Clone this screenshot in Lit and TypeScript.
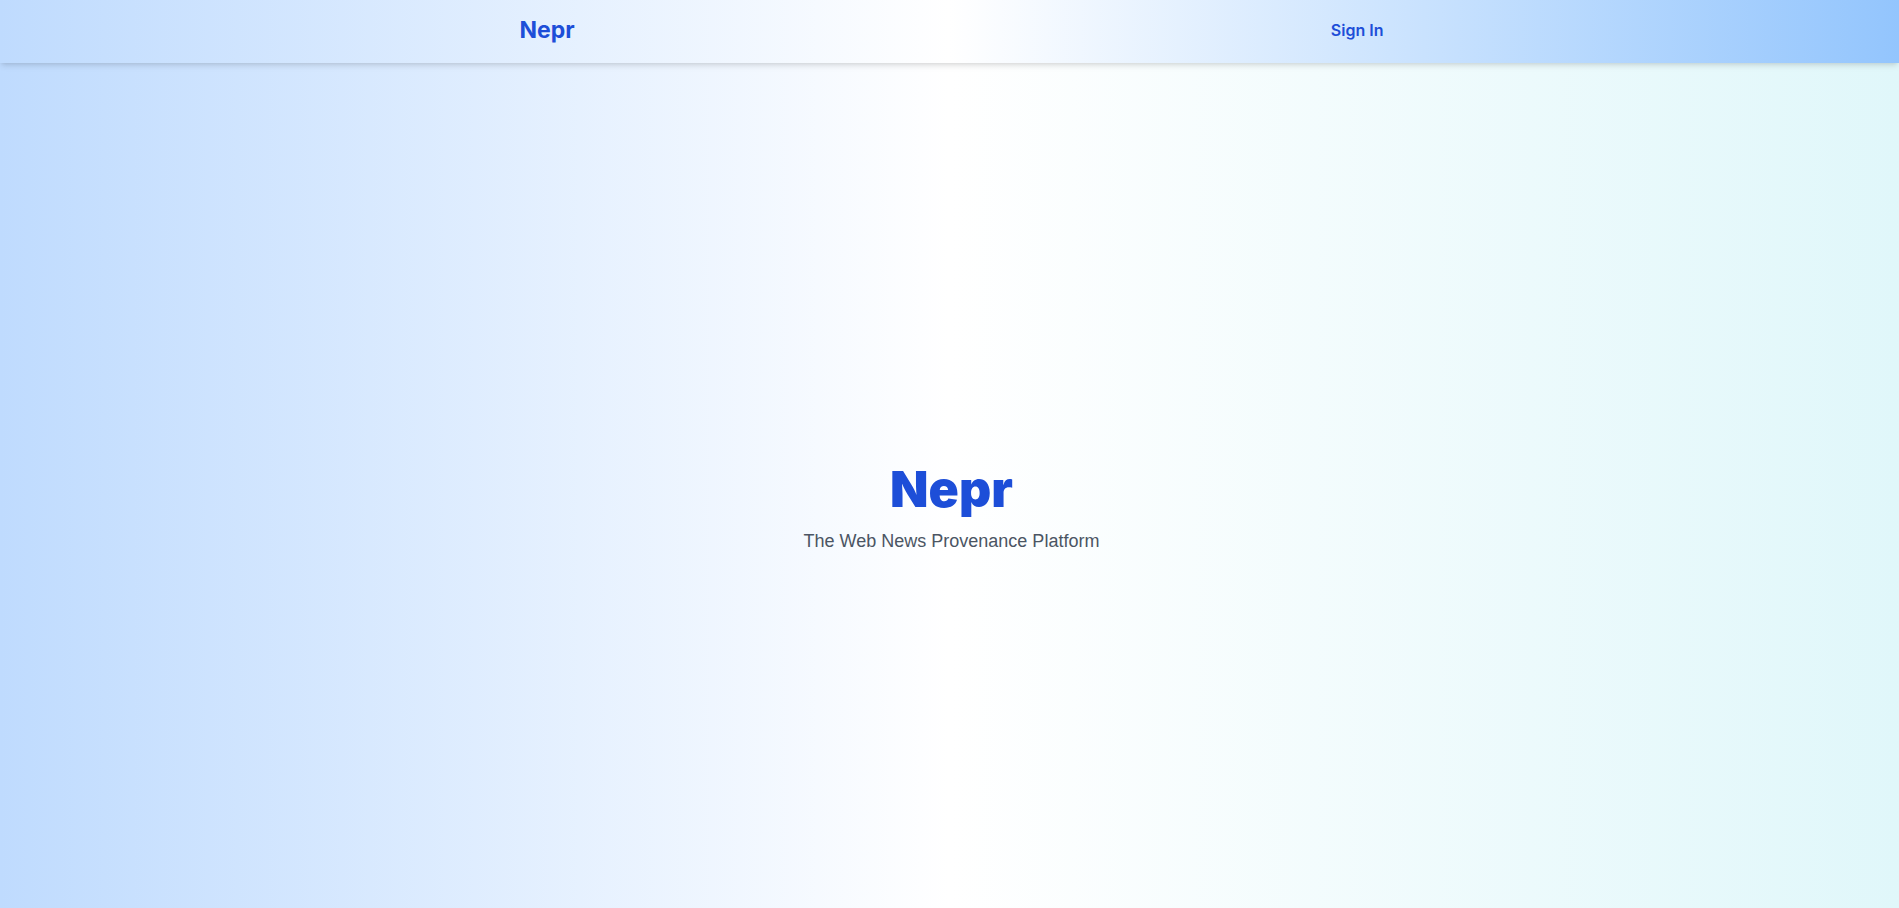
import { LitElement, html, css } from "lit";
import { customElement } from "lit/decorators.js";

@customElement("app-root")
export class AppRoot extends LitElement {
  static styles = css`
    :host {
      display: flex;
      flex-direction: column;
      min-height: 100vh;
      font-family: "Liberation Sans", Arial, sans-serif;
      background: linear-gradient(to right, #bfdbfe, #ffffff, #e0f7fa);
    }
    .bar {
      background: linear-gradient(to right, #bfdbfe, #ffffff, #93c5fd);
      box-shadow: 0 4px 6px -1px rgba(0, 0, 0, 0.1), 0 2px 4px -2px rgba(0, 0, 0, 0.1);
      padding: 14px 12px 17px 16px;
      font-family: Inter, sans-serif;
    }
    .inner {
      display: flex;
      justify-content: space-between;
      align-items: center;
      max-width: 864px;
      margin: 0 auto;
    }
    a {
      color: #1d4ed8;
      text-decoration: none;
    }
    .brand {
      font-size: 23px;
      line-height: 32px;
      font-weight: 700;
    }
    .sign {
      font-size: 16px;
      line-height: 24px;
      font-weight: 600;
    }
    main {
      flex: 1;
      display: flex;
      flex-direction: column;
      align-items: center;
      justify-content: center;
      padding: 48px 0 0 4px;
      text-align: center;
    }
    h1 {
      margin: 0 0 14px;
      font-family: "Arial Black", Inter, sans-serif;
      font-size: 50px;
      line-height: 48px;
      font-weight: 900;
      color: #1d4ed8;
    }
    p {
      margin: 0;
      font-size: 18px;
      line-height: 28px;
      color: #4b5563;
    }
  `;

  render() {
    return html`
      <header class="bar">
        <nav class="inner">
          <a class="brand" href="#">Nepr</a>
          <a class="sign" href="#signin">Sign In</a>
        </nav>
      </header>
      <main>
        <h1>Nepr</h1>
        <p>The Web News Provenance Platform</p>
      </main>
    `;
  }
}
